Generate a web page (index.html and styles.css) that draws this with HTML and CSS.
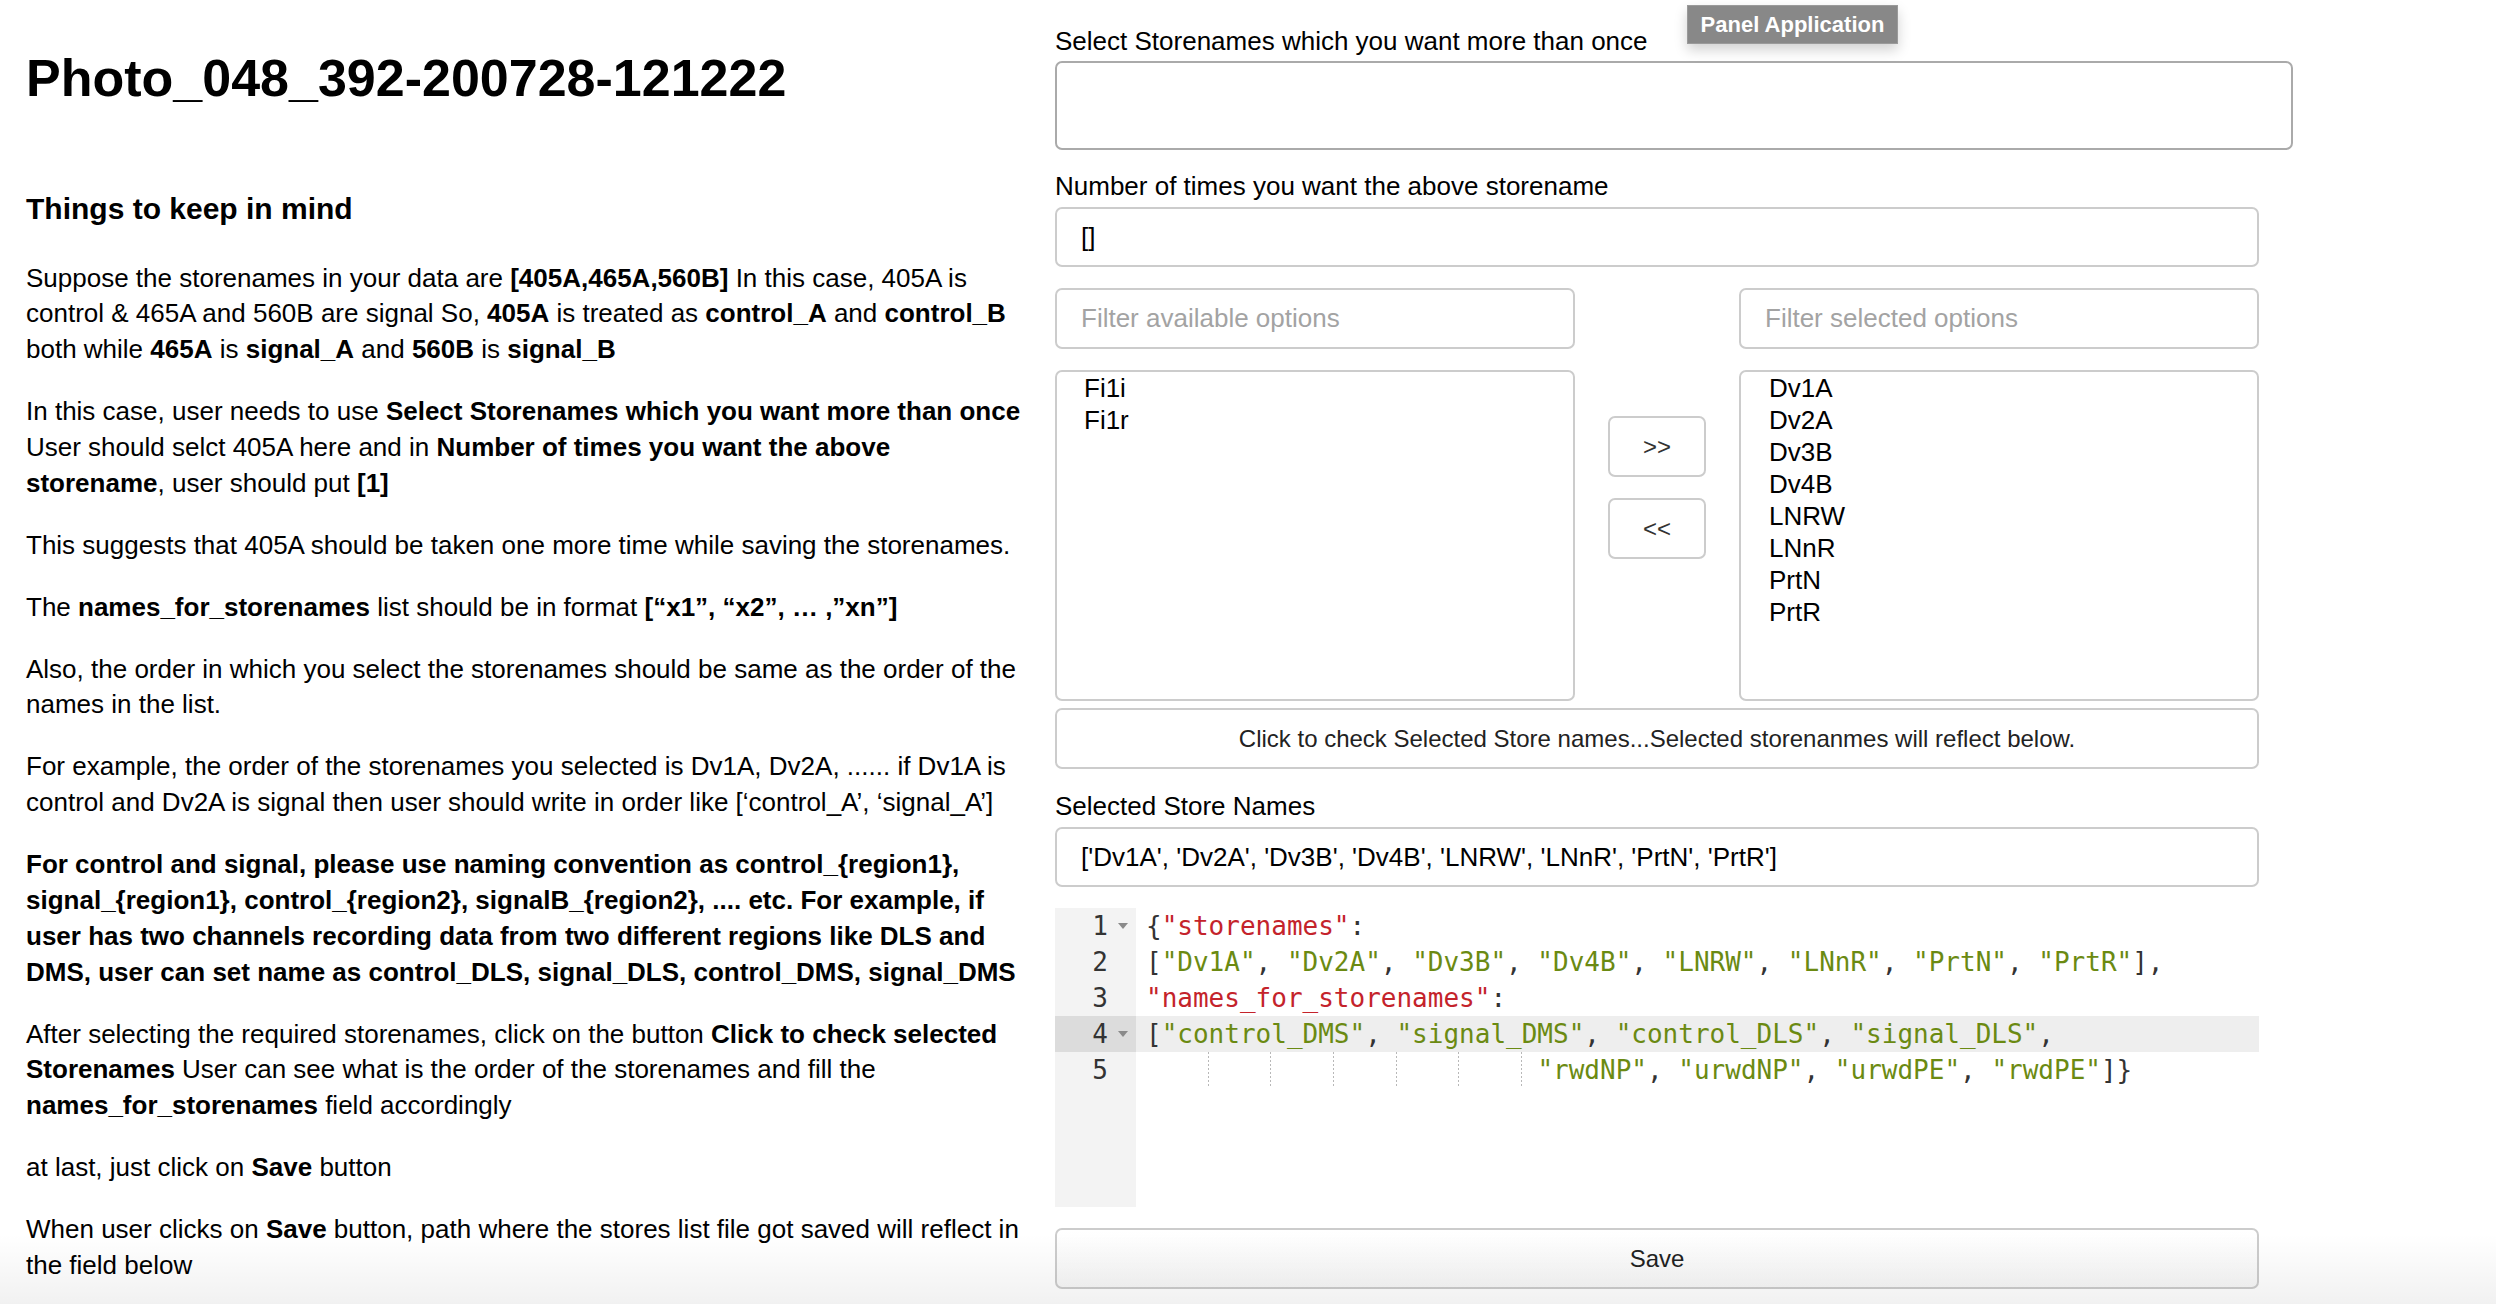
FILE: index.html
```html
<!DOCTYPE html>
<html lang="en">
<head>
<meta charset="utf-8">
<title>Panel Application</title>
<link rel="stylesheet" href="styles.css">
</head>
<body>
<div class="page">
  <div class="left">
    <h1 class="title">Photo_048_392-200728-121222</h1>
    <h3 class="subtitle">Things to keep in mind</h3>
    <p>Suppose the storenames in your data are <b>[405A,465A,560B]</b> In this case, 405A is control &amp; 465A and 560B are signal So, <b>405A</b> is treated as <b>control_A</b> and <b>control_B</b> both while <b>465A</b> is <b>signal_A</b> and <b>560B</b> is <b>signal_B</b></p>
    <p>In this case, user needs to use <b>Select Storenames which you want more than once</b> User should selct 405A here and in <b>Number of times you want the above storename</b>, user should put <b>[1]</b></p>
    <p>This suggests that 405A should be taken one more time while saving the storenames.</p>
    <p>The <b>names_for_storenames</b> list should be in format <b>[“x1”, “x2”, … ,”xn”]</b></p>
    <p>Also, the order in which you select the storenames should be same as the order of the names in the list.</p>
    <p>For example, the order of the storenames you selected is Dv1A, Dv2A, ...... if Dv1A is control and Dv2A is signal then user should write in order like [‘control_A’, ‘signal_A’]</p>
    <p><b>For control and signal, please use naming convention as control_{region1}, signal_{region1}, control_{region2}, signalB_{region2}, .... etc. For example, if user has two channels recording data from two different regions like DLS and DMS, user can set name as control_DLS, signal_DLS, control_DMS, signal_DMS</b></p>
    <p>After selecting the required storenames, click on the button <b>Click to check selected Storenames</b> User can see what is the order of the storenames and fill the <b>names_for_storenames</b> field accordingly</p>
    <p>at last, just click on <b>Save</b> button</p>
    <p>When user clicks on <b>Save</b> button, path where the stores list file got saved will reflect in the field below</p>
  </div>

  <div class="right">
    <label class="label label-first">Select Storenames which you want more than once</label>
    <div class="multichoice"></div>

    <label class="label">Number of times you want the above storename</label>
    <div class="input"><span class="value">[]</span></div>

    <div class="picker">
      <div class="picker-col">
        <div class="input filter"><span class="placeholder">Filter available options</span></div>
        <div class="listbox">
          <div class="option">Fi1i</div>
          <div class="option">Fi1r</div>
        </div>
      </div>
      <div class="picker-mid">
        <div class="btn small">&gt;&gt;</div>
        <div class="btn small">&lt;&lt;</div>
      </div>
      <div class="picker-col">
        <div class="input filter"><span class="placeholder">Filter selected options</span></div>
        <div class="listbox">
          <div class="option">Dv1A</div>
          <div class="option">Dv2A</div>
          <div class="option">Dv3B</div>
          <div class="option">Dv4B</div>
          <div class="option">LNRW</div>
          <div class="option">LNnR</div>
          <div class="option">PrtN</div>
          <div class="option">PrtR</div>
        </div>
      </div>
    </div>

    <div class="btn wide check">Click to check Selected Store names...Selected storenanmes will reflect below.</div>

    <label class="label label-sel">Selected Store Names</label>
    <div class="input"><span class="value">['Dv1A', 'Dv2A', 'Dv3B', 'Dv4B', 'LNRW', 'LNnR', 'PrtN', 'PrtR']</span></div>

    <div class="editor">
      <div class="gutter">
        <div class="gcell"><span>1</span><i class="fold"></i></div>
        <div class="gcell"><span>2</span><i class="nofold"></i></div>
        <div class="gcell"><span>3</span><i class="nofold"></i></div>
        <div class="gcell active"><span>4</span><i class="fold"></i></div>
        <div class="gcell"><span>5</span><i class="nofold"></i></div>
      </div>
      <div class="code">
        <div class="line"><span class="p">{</span><span class="k">"storenames"</span><span class="p">:</span></div>
        <div class="line"><span class="p">[</span><span class="s">"Dv1A"</span><span class="p">, </span><span class="s">"Dv2A"</span><span class="p">, </span><span class="s">"Dv3B"</span><span class="p">, </span><span class="s">"Dv4B"</span><span class="p">, </span><span class="s">"LNRW"</span><span class="p">, </span><span class="s">"LNnR"</span><span class="p">, </span><span class="s">"PrtN"</span><span class="p">, </span><span class="s">"PrtR"</span><span class="p">],</span></div>
        <div class="line"><span class="k">"names_for_storenames"</span><span class="p">:</span></div>
        <div class="line active"><span class="p">[</span><span class="s">"control_DMS"</span><span class="p">, </span><span class="s">"signal_DMS"</span><span class="p">, </span><span class="s">"control_DLS"</span><span class="p">, </span><span class="s">"signal_DLS"</span><span class="p">,</span></div>
        <div class="line"><span class="ig">    </span><span class="ig">    </span><span class="ig">    </span><span class="ig">    </span><span class="ig">    </span><span class="ig">    </span><span> </span><span class="s">"rwdNP"</span><span class="p">, </span><span class="s">"urwdNP"</span><span class="p">, </span><span class="s">"urwdPE"</span><span class="p">, </span><span class="s">"rwdPE"</span><span class="p">]}</span></div>
      </div>
    </div>

    <div class="btn wide save">Save</div>
  </div>
</div>

<div class="badge">Panel Application</div>
<div class="bottom-shade"></div>
</body>
</html>
```

FILE: styles.css
```css
html, body {
  margin: 0;
  padding: 0;
  background: #ffffff;
}

body {
  font-family: "Liberation Sans", Arial, Helvetica, sans-serif;
  color: #000;
  width: 2496px;
  height: 1304px;
  overflow: hidden;
  position: relative;
}

.page {
  display: flex;
  align-items: flex-start;
}

/* ---------- left column ---------- */
.left {
  width: 998px;
  padding-left: 26px;
  flex: none;
}

.title {
  font-size: 52px;
  line-height: 60px;
  font-weight: bold;
  margin: 48px 0 0 0;
}

.subtitle {
  font-size: 30px;
  line-height: 36px;
  font-weight: bold;
  margin: 83px 0 0 0;
}

.left p {
  font-size: 26px;
  line-height: 35.75px;
  margin: 26.3px 0 0 0;
}

.left .subtitle + p {
  margin-top: 33.5px;
}

/* ---------- right column ---------- */
.right {
  width: 1238px;
  margin-left: 31px;
  flex: none;
  display: flex;
  flex-direction: column;
  align-items: flex-start;
}

.label {
  display: block;
  font-size: 26px;
  line-height: 30px;
  height: 30px;
  margin-top: 21px;
  white-space: nowrap;
}

.label-first {
  margin-top: 26px;
}

.label-sel {
  margin-top: 22px;
}

.multichoice {
  box-sizing: border-box;
  width: 1238px;
  height: 89px;
  margin-top: 5px;
  border: 2px solid #aaaaaa;
  border-radius: 7px;
  background: #fff;
}

.input {
  box-sizing: border-box;
  width: 1204px;
  height: 60px;
  margin-top: 6px;
  border: 2px solid #cccccc;
  border-radius: 7px;
  background: #fff;
  padding: 0 24px;
  display: flex;
  align-items: center;
  font-size: 26px;
  white-space: nowrap;
}

.placeholder {
  color: #a3a3a3;
}

.value {
  color: #000;
}

/* dual list picker */
.picker {
  display: flex;
  width: 1204px;
  margin-top: 21px;
}

.picker-col {
  width: 520px;
  flex: none;
  display: flex;
  flex-direction: column;
}

.picker-col .input.filter {
  width: 520px;
  height: 61px;
  margin-top: 0;
}

.picker-mid {
  flex: 1;
  display: flex;
  flex-direction: column;
  align-items: center;
  padding-top: 128px;
  gap: 21px;
}

.listbox {
  box-sizing: border-box;
  width: 520px;
  height: 331px;
  margin-top: 21px;
  border: 2px solid #cccccc;
  border-radius: 7px;
  background: #fff;
  padding: 0 0 0 27px;
}

.picker-col + .picker-mid + .picker-col .listbox {
  padding-left: 28px;
}

.option {
  font-size: 26px;
  line-height: 32px;
  height: 32px;
}

.btn {
  box-sizing: border-box;
  border: 2px solid #cccccc;
  border-radius: 7px;
  background: #fff;
  display: flex;
  align-items: center;
  justify-content: center;
  font-size: 24px;
  color: #222;
  white-space: nowrap;
}

.btn.small {
  width: 98px;
  height: 61px;
  color: #333;
}

.btn.wide {
  width: 1204px;
  height: 61px;
}

.check {
  margin-top: 7px;
}

.save {
  margin-top: 21px;
  background: linear-gradient(#ffffff, #f7f7f7);
}

/* code editor */
.editor {
  display: flex;
  width: 1204px;
  height: 299px;
  margin-top: 21px;
  background: #fff;
  font-family: "DejaVu Sans Mono", "Liberation Mono", monospace;
  font-size: 26px;
}

.gutter {
  width: 81px;
  flex: none;
  background: #f3f3f3;
  color: #333;
}

.gcell {
  height: 36px;
  line-height: 36px;
  display: flex;
  justify-content: flex-end;
  align-items: center;
}

.gcell.active {
  background: #dcdcdc;
}

.gcell .fold,
.gcell .nofold {
  display: block;
  width: 28px;
  height: 36px;
  position: relative;
}

.gcell .fold::after {
  content: "";
  position: absolute;
  left: 10px;
  top: 15px;
  border-left: 5px solid transparent;
  border-right: 5px solid transparent;
  border-top: 6px solid #8a8a8a;
}

.code {
  flex: 1;
  color: #333;
}

.line {
  height: 36px;
  line-height: 36px;
  padding-left: 10px;
  white-space: pre;
}

.line.active {
  background: #eeeeee;
}

.k {
  color: #c4232b;
}

.s {
  color: #6b8a12;
}

.p {
  color: #333;
}

.ig {
  display: inline-block;
  height: 36px;
  vertical-align: top;
  background-image: linear-gradient(#b8b8b8 50%, transparent 50%);
  background-size: 1px 4px;
  background-repeat: repeat-y;
  background-position: right top;
}

/* overlay badge */
.badge {
  position: absolute;
  left: 1687px;
  top: 5px;
  width: 211px;
  height: 39px;
  box-sizing: border-box;
  background: #888888;
  border: 1px solid #9a9a9a;
  color: #fff;
  font-size: 22px;
  font-weight: bold;
  display: flex;
  align-items: center;
  justify-content: center;
  box-shadow: 0 6px 12px rgba(0, 0, 0, 0.18);
}

.bottom-shade {
  position: absolute;
  left: 0;
  right: 0;
  bottom: 0;
  height: 70px;
  background: linear-gradient(rgba(0, 0, 0, 0), rgba(0, 0, 0, 0.055));
  pointer-events: none;
}
```
